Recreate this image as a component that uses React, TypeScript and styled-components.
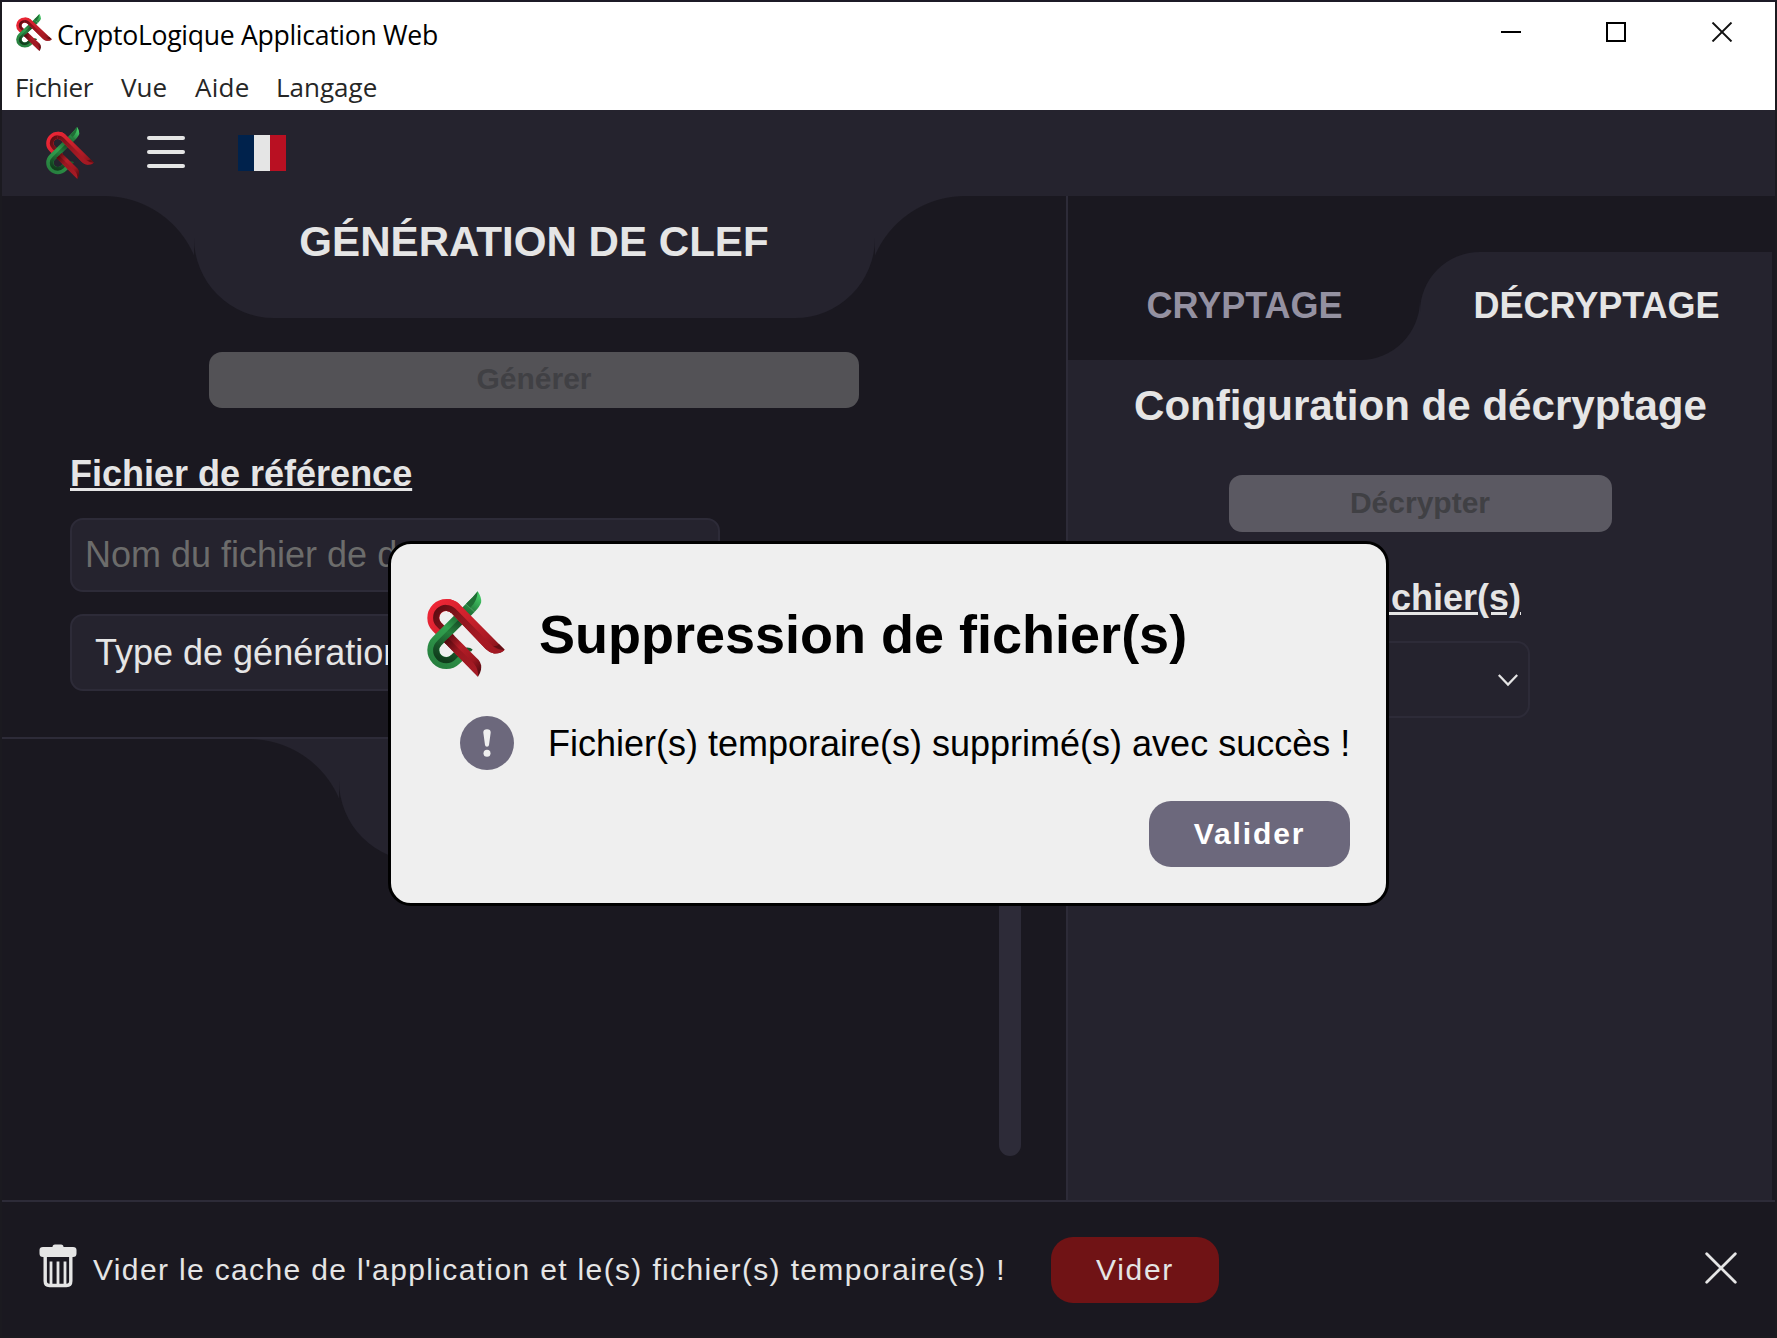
import React from "react";
import styled, { createGlobalStyle, css } from "styled-components";

const c = {
  bg: "#1a1820",
  panel: "#25232e",
  line: "#2d2b38",
  edge: "#1b1a20",
  text: "#e5e5e5",
  accent: "#6c687c",
};

const GlobalStyle = createGlobalStyle`
  * { box-sizing: border-box; }
  html, body { margin: 0; padding: 0; background: ${c.bg}; }
  body { font-family: "Liberation Sans", Arial, sans-serif; overflow: hidden; }
  h1, h2, h3, p { margin: 0; }
  button, input { font-family: inherit; margin: 0; }
  svg { flex: none; }
`;

const Window = styled.div`
  position: relative;
  width: 1777px;
  height: 1338px;
  display: flex;
  flex-direction: column;
  border: 2px solid ${c.edge};
  border-top-color: #1c1a26;
  background: ${c.bg};
  overflow: hidden;
`;

/* ---------- Title bar and menu ---------- */

const Chrome = styled.header`
  height: 108px;
  flex: none;
  background: #fff;
  display: flex;
  flex-direction: column;
  font-family: "Open Sans", "Noto Sans", sans-serif;
`;

const TitleBar = styled.div`
  height: 60px;
  display: flex;
  align-items: center;
  padding: 0 42px 0 14px;
`;

const AppTitle = styled.span`
  margin-left: 5px;
  padding-top: 5px;
  font-size: 26.6px;
  line-height: 36px;
  letter-spacing: -0.3px;
  color: #000;
  white-space: nowrap;
`;

const WindowControls = styled.div`
  margin-left: auto;
  display: flex;
  gap: 85px;
  color: #000;
`;

const MenuBar = styled.nav`
  display: flex;
  align-items: center;
  gap: 28px;
  height: 48px;
  padding: 2px 0 0 13px;
`;

const MenuItem = styled.span<{ $w: number; $spacing?: number }>`
  width: ${(p) => p.$w}px;
  font-size: 26px;
  line-height: 36px;
  letter-spacing: ${(p) => p.$spacing ?? 0}px;
  color: #262626;
  white-space: nowrap;
`;

/* ---------- Toolbar ---------- */

const Toolbar = styled.div`
  height: 86px;
  flex: none;
  display: flex;
  align-items: center;
  padding-left: 44px;
  background: ${c.panel};

  > svg {
    margin-bottom: 1px;
  }
`;

const Burger = styled.div`
  margin: 0 0 2px 53px;
  width: 38px;
  height: 32px;
  display: flex;
  flex-direction: column;
  justify-content: space-between;

  span {
    height: 4.4px;
    border-radius: 2.2px;
    background: ${c.text};
  }
`;

const Flag = styled.div`
  margin-left: 53px;
  width: 48px;
  height: 36px;
  background: linear-gradient(to right, #00224c 0 16px, #e5e5e5 16px 32px, #b91022 32px);
`;

/* ---------- Panels ---------- */

const Body = styled.main`
  flex: 1;
  min-height: 0;
  display: flex;
  padding-right: 3px;
`;

const LeftPanel = styled.section`
  width: 1066px;
  border-right: 2px solid ${c.line};
  display: flex;
  flex-direction: column;
`;

const Section = styled.div<{ $h?: number }>`
  ${(p) =>
    p.$h
      ? css`
          height: ${p.$h}px;
          border-bottom: 2px solid ${c.line};
        `
      : css`
          flex: 1;
        `}
  display: flex;
  flex-direction: column;
  align-items: center;
`;

const HangingTab = styled.div<{ $w: number }>`
  position: relative;
  width: ${(p) => p.$w}px;
  height: 122px;
  flex: none;
  padding-top: 22px;
  text-align: center;
  background: ${c.panel};
  border-radius: 0 0 80px 80px;

  &::before,
  &::after {
    content: "";
    position: absolute;
    top: 0;
    width: 90px;
    height: 60px;
  }
  &::before {
    right: 100%;
    background: radial-gradient(circle at 0 98px, ${c.bg} 97.5px, ${c.panel} 98.5px);
  }
  &::after {
    left: 100%;
    background: radial-gradient(circle at 100% 98px, ${c.bg} 97.5px, ${c.panel} 98.5px);
  }
`;

const TabTitle = styled.h1`
  font-size: 42.1px;
  line-height: 48px;
  font-weight: 700;
  color: ${c.text};
  white-space: nowrap;
`;

const DisabledButton = styled.button<{ $w: number; $h: number; $bg: string; $top: number }>`
  width: ${(p) => p.$w}px;
  height: ${(p) => p.$h}px;
  margin-top: ${(p) => p.$top}px;
  flex: none;
  padding: 0 0 2px;
  border: 0;
  border-radius: 13px;
  background: ${(p) => p.$bg};
  color: #404044;
  font-size: 30px;
  font-weight: 700;
  line-height: 54px;
`;

const Form = styled.div`
  align-self: stretch;
  padding: 45px 0 0 68px;
  display: flex;
  flex-direction: column;
`;

const FieldLabel = styled.h3`
  font-size: 36px;
  line-height: 42px;
  font-weight: 700;
  color: ${c.text};
  text-decoration: underline;
  white-space: nowrap;
`;

const FileInput = styled.input`
  width: 650px;
  height: 74px;
  margin-top: 23px;
  padding: 0 14px 0 13px;
  border: 2px solid ${c.line};
  border-radius: 13px;
  background: ${c.panel};
  font-size: 36px;
  color: ${c.text};

  &::placeholder {
    color: #6c6c6b;
    opacity: 1;
  }
`;

const Select = styled.div<{ $w: number; $top: number }>`
  width: ${(p) => p.$w}px;
  height: 77px;
  margin-top: ${(p) => p.$top}px;
  padding: 0 9px 0 23px;
  display: flex;
  align-items: center;
  justify-content: space-between;
  border: 2px solid ${c.line};
  border-radius: 13px;
  background: ${c.panel};
  font-size: 36px;
  color: ${c.text};
`;

const ScrollArea = styled.div`
  align-self: stretch;
  flex: 1;
  display: flex;
  justify-content: flex-end;
  padding: 0 45px 44px 0;
`;

const ScrollThumb = styled.div`
  width: 22px;
  border-radius: 11px;
  background: ${c.line};
`;

const RightPanel = styled.section`
  flex: 1;
  display: flex;
  flex-direction: column;
  align-items: center;
  background: ${c.panel};
`;

const Tabs = styled.div`
  align-self: stretch;
  height: 164px;
  display: flex;
  align-items: flex-end;
  background: linear-gradient(to right, ${c.panel} 352px, ${c.bg} 352px);
`;

const Tab = styled.div<{ $active?: boolean }>`
  width: 352px;
  display: flex;
  align-items: flex-end;
  justify-content: center;
  font-size: 36px;
  font-weight: 700;
  line-height: 42px;
  padding: 0 0 33px 1px;
  ${(p) =>
    p.$active
      ? css`
          height: 108px;
          color: ${c.text};
          background: ${c.panel};
          border-top-left-radius: 60px;
        `
      : css`
          height: 164px;
          color: #9491a1;
          background: ${c.bg};
          border-bottom-right-radius: 60px;
        `}
`;

const ConfigTitle = styled.h2`
  margin-top: 22px;
  padding-left: 1px;
  font-size: 42.1px;
  line-height: 48px;
  font-weight: 700;
  color: ${c.text};
  white-space: nowrap;
`;

const FieldGroup = styled.div`
  align-self: stretch;
  padding: 45px 242px 0 0;
  display: flex;
  flex-direction: column;
  align-items: flex-end;

  h3 {
    margin-right: 9px;
  }
`;

/* ---------- Footer ---------- */

const Footer = styled.footer`
  height: 136px;
  flex: none;
  display: flex;
  align-items: center;
  padding: 2px 37px 0;
  border-top: 2px solid ${c.line};
  background: ${c.bg};

  > svg {
    margin-bottom: 8px;
  }
`;

const FooterText = styled.p`
  width: 913px;
  margin-left: 16px;
  padding-bottom: 1px;
  font-size: 30px;
  line-height: 36px;
  letter-spacing: 1.356px;
  color: ${c.text};
  white-space: nowrap;
`;

const Button = styled.button<{ $w: number; $bg: string; $bold?: boolean }>`
  width: ${(p) => p.$w}px;
  height: 66px;
  padding: 0 0 1px;
  border: 0;
  border-radius: 22px;
  background: ${(p) => p.$bg};
  color: ${(p) => (p.$bold ? "#fff" : c.text)};
  font-size: 30px;
  font-weight: ${(p) => (p.$bold ? 700 : 400)};
  letter-spacing: ${(p) => (p.$bold ? 1.9 : 1.7)}px;
`;

const FooterButton = styled(Button)`
  margin-left: 45px;
`;

const CloseButton = styled.div`
  margin-left: auto;
  padding-bottom: 5px;
  display: flex;
`;

/* ---------- Dialog ---------- */

const Overlay = styled.div`
  position: absolute;
  inset: 539px 0 auto 0;
  display: flex;
  justify-content: center;
`;

const Dialog = styled.div`
  width: 1001px;
  height: 365px;
  display: flex;
  flex-direction: column;
  padding: 46px 36px 36px;
  border: 3px solid #000;
  border-radius: 23px;
  background: #efefef;
`;

const DialogHead = styled.div`
  display: flex;
  align-items: center;
  height: 88px;
`;

const DialogTitle = styled.h2`
  margin-left: 34px;
  padding-bottom: 1px;
  font-size: 54px;
  line-height: 62px;
  font-weight: 700;
  color: #000;
  white-space: nowrap;
`;

const DialogMessage = styled.div`
  display: flex;
  align-items: center;
  height: 54px;
  margin-top: 38px;
  padding-left: 33px;
`;

const MessageText = styled.p`
  margin-left: 34px;
  padding-top: 2px;
  font-size: 36px;
  line-height: 42px;
  color: #000;
  white-space: nowrap;
`;

const DialogActions = styled.div`
  display: flex;
  justify-content: flex-end;
  margin-top: 31px;
`;

/* ---------- Drawings ---------- */

function Logo({ width, height, id }: { width: number; height: number; id: string }) {
  const u = (n: string) => `url(#${id}-${n})`;
  return (
    <svg width={width} height={height} viewBox="81 62 234 259" preserveAspectRatio="none" fill="none">
      <defs>
        <linearGradient id={`${id}-red`} gradientUnits="userSpaceOnUse" x1="110" y1="90" x2="300" y2="250">
          <stop offset="0" stopColor="#ee2636" />
          <stop offset="0.4" stopColor="#cf212c" />
          <stop offset="0.75" stopColor="#ab1b25" />
          <stop offset="1" stopColor="#7d1219" />
        </linearGradient>
        <linearGradient id={`${id}-redIn`} gradientUnits="userSpaceOnUse" x1="110" y1="110" x2="300" y2="250">
          <stop offset="0" stopColor="#5c0c12" />
          <stop offset="0.35" stopColor="#8f161f" />
          <stop offset="0.7" stopColor="#a81a24" />
          <stop offset="1" stopColor="#a01822" />
        </linearGradient>
        <linearGradient id={`${id}-leg`} gradientUnits="userSpaceOnUse" x1="140" y1="200" x2="240" y2="300">
          <stop offset="0" stopColor="#5a0b11" />
          <stop offset="0.35" stopColor="#b51d27" />
          <stop offset="0.75" stopColor="#9d1720" />
          <stop offset="1" stopColor="#5f0d13" />
        </linearGradient>
        <linearGradient id={`${id}-legIn`} gradientUnits="userSpaceOnUse" x1="135" y1="210" x2="235" y2="310">
          <stop offset="0" stopColor="#4a090e" />
          <stop offset="0.35" stopColor="#9a1720" />
          <stop offset="1" stopColor="#a81b25" />
        </linearGradient>
        <linearGradient id={`${id}-green`} gradientUnits="userSpaceOnUse" x1="240" y1="80" x2="110" y2="280">
          <stop offset="0" stopColor="#43c866" />
          <stop offset="0.22" stopColor="#237a3b" />
          <stop offset="0.34" stopColor="#1c6430" />
          <stop offset="0.55" stopColor="#31a04e" />
          <stop offset="1" stopColor="#27803f" />
        </linearGradient>
        <linearGradient id={`${id}-greenIn`} gradientUnits="userSpaceOnUse" x1="180" y1="140" x2="130" y2="270">
          <stop offset="0" stopColor="#12401f" />
          <stop offset="0.4" stopColor="#25803c" />
          <stop offset="0.75" stopColor="#185429" />
          <stop offset="1" stopColor="#103d1c" />
        </linearGradient>
      </defs>
      {/* red loop, passing under the green ribbon */}
      <path d="M166.6 115.4A39 39 0 1 0 111.4 170.6L150 209.2" stroke={u("red")} strokeWidth="36" />
      <path d="M160.2 121.8A30 30 0 1 0 117.8 164.2L156.4 202.8" stroke={u("redIn")} strokeWidth="18" />
      {/* green ribbon */}
      <path d="M190 234Q208 229 218 238Q216 244 206 246L190 262Z" fill="#1b5c2d" />
      <path d="M198.3 100.1Q220 80 233 62.500Q245 80 243.500 96Q241 107 223.700 125.500Z" fill={u("green")} />
      <path d="M198.300 100.100Q220 80 233 62.500Q232 92 211 112.800Z" fill="#1f6e35" />
      <path d="M211 112.800L111.400 212.400A39 39 0 1 0 166.600 267.600L190 244.200" stroke={u("green")} strokeWidth="36" />
      <path d="M190 146.500L117.800 218.800A30 30 0 1 0 160.200 261.200L180 241.400" stroke={u("greenIn")} strokeWidth="18" />
      {/* red diagonal and leg, passing over the green ribbon */}
      <path d="M138 86A57 57 0 0 1 179.300 102.700L314 239Q306 251 282 250Q268 248 257 237L153.900 128.100A21 21 0 0 0 138 122Z" fill={u("red")} />
      <path d="M138 104A39 39 0 0 1 166.600 115.400L280 230Q292 240 313 240Q302 251 282 250Q268 248 257 237L153.900 128.100A21 21 0 0 0 138 122Z" fill={u("redIn")} />
      <path d="M280 228Q295 240 314 239L296 221Q296 228 280 228Z" fill="#640e14" />
      <path d="M157.700 191.300L236 269.500Q246 282 243 299Q241 310 234 320.500L132.300 216.700Z" fill={u("leg")} />
      <path d="M145 204L222 281Q236 298 234 320.500L132.300 216.700Z" fill={u("legIn")} />
    </svg>
  );
}

function Chevron() {
  return (
    <svg width="22" height="14" viewBox="0 0 22 14" fill="none" stroke={c.text} strokeWidth="2.2">
      <path d="M1.800 2L11 11.600L20.200 2" />
    </svg>
  );
}

function TrashIcon() {
  return (
    <svg width="38" height="44" viewBox="0 0 38 44" fill="none">
      <path
        d="M13.500 3Q13.500 0.500 16 0.500H22Q24.500 0.500 24.500 3H34Q37.500 3 37.500 6V9.500Q37.500 13 34 13H4Q0.500 13 0.500 9.500V6Q0.500 3 4 3Z"
        fill={c.text}
      />
      <path d="M6.200 12V37Q6.200 41.500 10.500 41.500H27.500Q31.800 41.500 31.800 37V12" stroke={c.text} strokeWidth="3.400" />
      <path d="M12 17.500V40M19 17.500V40M26 17.500V40" stroke={c.text} strokeWidth="2.800" strokeDasharray="22.500 40" />
    </svg>
  );
}

function InfoIcon() {
  return (
    <svg width="54" height="54" viewBox="0 0 54 54">
      <circle cx="27" cy="27" r="27" fill={c.accent} />
      <path d="M23.300 16.500Q23.300 13.300 27 13.300Q30.700 13.300 30.700 16.500L29 29Q28.800 30.800 27 30.800Q25.200 30.800 25 29Z" fill="#efefef" />
      <circle cx="27" cy="37.300" r="3.500" fill="#efefef" />
    </svg>
  );
}

export default function App() {
  return (
    <>
      <GlobalStyle />
      <Window>
        <Chrome>
          <TitleBar>
            <Logo id="title" width={36} height={37} />
            <AppTitle>CryptoLogique Application Web</AppTitle>
            <WindowControls>
              <svg width="20" height="20" viewBox="0 0 20 20">
                <path d="M0 10H20" stroke="#000" strokeWidth="2" />
              </svg>
              <svg width="20" height="20" viewBox="0 0 20 20">
                <rect x="1" y="1" width="18" height="18" fill="none" stroke="#000" strokeWidth="2" />
              </svg>
              <svg width="22" height="20" viewBox="0 0 22 20">
                <path d="M1.500 0.500L20.500 19.500M20.500 0.500L1.500 19.500" stroke="#111" strokeWidth="1.900" />
              </svg>
            </WindowControls>
          </TitleBar>
          <MenuBar>
            <MenuItem $w={78} $spacing={-0.3}>Fichier</MenuItem>
            <MenuItem $w={46}>Vue</MenuItem>
            <MenuItem $w={53} $spacing={0.3}>Aide</MenuItem>
            <MenuItem $w={102}>Langage</MenuItem>
          </MenuBar>
        </Chrome>

        <Toolbar>
          <Logo id="bar" width={48} height={52} />
          <Burger>
            <span />
            <span />
            <span />
          </Burger>
          <Flag />
        </Toolbar>

        <Body>
          <LeftPanel>
            <Section $h={543}>
              <HangingTab $w={681}>
                <TabTitle>GÉNÉRATION DE CLEF</TabTitle>
              </HangingTab>
              <DisabledButton $w={650} $h={56} $bg="#535256" $top={34}>
                Générer
              </DisabledButton>
              <Form>
                <FieldLabel>Fichier de référence</FieldLabel>
                <FileInput placeholder="Nom du fichier de dump" />
                <Select $w={650} $top={22}>
                  Type de génération
                </Select>
              </Form>
            </Section>
            <Section>
              <HangingTab $w={391} />
              <ScrollArea>
                <ScrollThumb />
              </ScrollArea>
            </Section>
          </LeftPanel>

          <RightPanel>
            <Tabs>
              <Tab>CRYPTAGE</Tab>
              <Tab $active>DÉCRYPTAGE</Tab>
            </Tabs>
            <ConfigTitle>Configuration de décryptage</ConfigTitle>
            <DisabledButton $w={383} $h={57} $bg="#5b5962" $top={45}>
              Décrypter
            </DisabledButton>
            <FieldGroup>
              <FieldLabel>Sélection de fichier(s)</FieldLabel>
              <Select $w={394} $top={22}>
                <span />
                <Chevron />
              </Select>
            </FieldGroup>
          </RightPanel>
        </Body>

        <Footer>
          <TrashIcon />
          <FooterText>Vider le cache de l'application et le(s) fichier(s) temporaire(s) !</FooterText>
          <FooterButton $w={168} $bg="#701315">
            Vider
          </FooterButton>
          <CloseButton>
            <svg width="34" height="50" viewBox="0 0 34 50">
              <path d="M2.700 10.700L31.300 39.300M31.300 10.700L2.700 39.300" stroke={c.text} strokeWidth="2.800" strokeLinecap="round" />
            </svg>
          </CloseButton>
        </Footer>

        <Overlay>
          <Dialog role="dialog">
            <DialogHead>
              <Logo id="dialog" width={78} height={86} />
              <DialogTitle>Suppression de fichier(s)</DialogTitle>
            </DialogHead>
            <DialogMessage>
              <InfoIcon />
              <MessageText>Fichier(s) temporaire(s) supprimé(s) avec succès !</MessageText>
            </DialogMessage>
            <DialogActions>
              <Button $w={201} $bg={c.accent} $bold>
                Valider
              </Button>
            </DialogActions>
          </Dialog>
        </Overlay>
      </Window>
    </>
  );
}
